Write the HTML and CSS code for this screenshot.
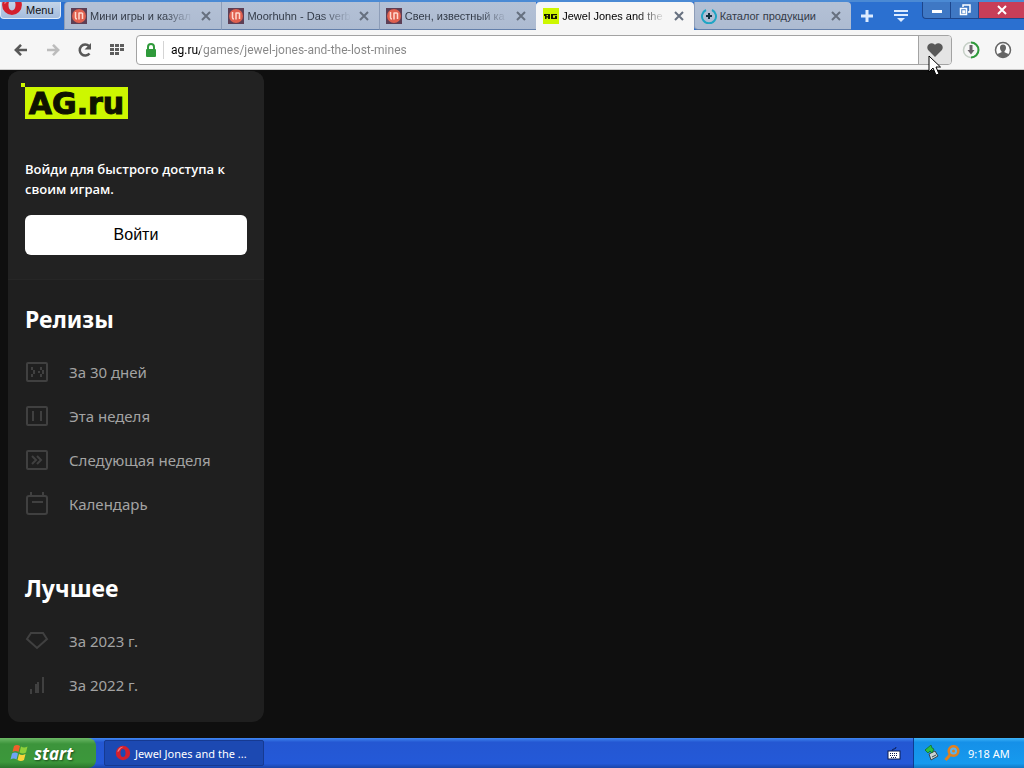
FILE: index.html
```html
<!DOCTYPE html>
<html lang="ru">
<head>
<meta charset="UTF-8" />
<meta name="viewport" content="width=device-width, initial-scale=1" />
<title>Jewel Jones and the Lost Mines</title>
<link rel="stylesheet" href="styles.css">
</head>
<body>

<!-- shared symbols -->
<svg class="symbols" aria-hidden="true">
  <symbol id="opera" viewBox="0 0 20 20">
    <path fill="#d3202e" fill-rule="evenodd" d="M10 1a9 9 0 1 0 0 18a9 9 0 1 0 0-18zM10 5c2 0 3.200 2 3.200 5s-1.200 5-3.200 5-3.200-2-3.200-5 1.200-5 3.200-5z"/>
    <path fill="#f07a80" d="M5 4.500Q7.500 1.800 10.500 2.200 7 3.500 5.500 7 4 9 3 9 3 6.500 5 4.500z"/>
  </symbol>
  <symbol id="mini" viewBox="0 0 16 16">
    <rect width="16" height="16" fill="#5d3f55"/>
    <circle cx="8" cy="8" r="7" fill="#e0604f"/>
    <path d="M4.500 4v5.500q0 1.500 1.500 1.500M8 4.500v7M11.500 5v6M8 5h3.500" stroke="#ffd9cf" stroke-width="1.500" fill="none"/>
  </symbol>
  <symbol id="close" viewBox="0 0 10 10">
    <path d="M1 1l8 8M9 1l-8 8" stroke="currentColor" stroke-width="2" fill="none"/>
  </symbol>
</svg>

<header class="titlebar">
  <button class="menu-btn"><svg class="menu-logo" width="22" height="24"><use href="#opera"/></svg>Menu</button>
  <nav class="tabs" aria-label="Tabs">
    <div class="tab">
      <svg width="16" height="16"><use href="#mini"/></svg>
      <a href="#" class="tab-title fade">Мини игры и казуал</a>
      <button class="tab-close" aria-label="Close"><svg width="10" height="10"><use href="#close"/></svg></button>
    </div>
    <div class="tab">
      <svg width="16" height="16"><use href="#mini"/></svg>
      <a href="#" class="tab-title fade">Moorhuhn - Das verb</a>
      <button class="tab-close" aria-label="Close"><svg width="10" height="10"><use href="#close"/></svg></button>
    </div>
    <div class="tab">
      <svg width="16" height="16"><use href="#mini"/></svg>
      <a href="#" class="tab-title fade">Свен, известный ка</a>
      <button class="tab-close" aria-label="Close"><svg width="10" height="10"><use href="#close"/></svg></button>
    </div>
    <div class="tab active">
      <svg width="16" height="16" viewBox="0 0 16 16">
        <rect width="16" height="16" fill="#cdf700"/>
        <path fill="#161900" fill-rule="evenodd" d="M1 6h6v5H5V9.500H3.500V11H2V8H1zM3.500 7v1.300H5V7zM8 6h6v1.200H10v2.600h2V8h2v3H8z"/>
      </svg>
      <a href="#" class="tab-title fade">Jewel Jones and the l</a>
      <button class="tab-close" aria-label="Close"><svg width="10" height="10"><use href="#close"/></svg></button>
    </div>
    <div class="tab">
      <svg width="16" height="16" viewBox="0 0 16 16">
        <path d="M5 2A7 7 0 1 0 11 2" fill="none" stroke="#1fa5c4" stroke-width="2"/>
        <path d="M8 5v6M5 8h6" stroke="#12303f" stroke-width="2"/>
      </svg>
      <a href="#" class="tab-title">Каталог продукции</a>
      <button class="tab-close" aria-label="Close"><svg width="10" height="10"><use href="#close"/></svg></button>
    </div>
  </nav>
  <button class="strip-btn" aria-label="New tab">
    <svg width="12" height="12" viewBox="0 0 12 12"><path d="M6 0v12M0 6h12" stroke="#dcebff" stroke-width="3"/></svg>
  </button>
  <button class="strip-btn" aria-label="Tab menu">
    <svg width="14" height="14" viewBox="0 0 14 14"><path d="M0 2h14M0 6h14" stroke="#dcebff" stroke-width="2"/><path d="M3 9h8l-4 4z" fill="#dcebff"/></svg>
  </button>
  <div class="window-controls">
    <button aria-label="Minimize"><svg width="12" height="12" viewBox="0 0 12 12"><rect x="1" y="6" width="10" height="3" fill="#fff"/></svg></button>
    <button aria-label="Restore"><svg width="12" height="12" viewBox="0 0 12 12"><path d="M4 3V1h7v7H9M1.500 4.500h6v6h-6zM4 7h1.500v1.500H4z" fill="none" stroke="#fff" stroke-width="1.500"/></svg></button>
    <button class="close-window" aria-label="Close window"><svg width="10" height="10"><use href="#close"/></svg></button>
  </div>
</header>

<div class="toolbar">
  <button class="tool" aria-label="Back">
    <svg width="14" height="12" viewBox="0 0 16 14"><path d="M15 7H3M8 1L2 7l6 6" fill="none" stroke="#585858" stroke-width="3"/></svg>
  </button>
  <button class="tool" aria-label="Forward">
    <svg width="14" height="12" viewBox="0 0 16 14"><path d="M1 7h12M8 1l6 6-6 6" fill="none" stroke="#bcbcbc" stroke-width="3"/></svg>
  </button>
  <button class="tool" aria-label="Reload">
    <svg width="16" height="16" viewBox="0 0 16 16"><path d="M12.500 11.500A5.500 5.500 0 1 1 12 4" fill="none" stroke="#585858" stroke-width="2.500"/><path d="M14 1v6.500H7.500z" fill="#585858"/></svg>
  </button>
  <button class="tool" aria-label="Speed dial">
    <svg width="14" height="12" viewBox="0 0 14 12"><path d="M0 1.500h14M0 5.500h14M0 9.500h9" stroke="#5d5d5d" stroke-width="3" stroke-dasharray="4 1"/></svg>
  </button>
  <div class="address">
    <svg class="lock" width="12" height="14" viewBox="0 0 12 14"><path d="M3 7V4a3 3 0 0 1 6 0v3" fill="none" stroke="#2f9a3b" stroke-width="2"/><rect x="1" y="6" width="10" height="8" rx="1" fill="#2f9a3b"/></svg>
    <input type="text" aria-label="Address" value="ag.ru/games/jewel-jones-and-the-lost-mines">
    <button class="heart" aria-label="Bookmark">
      <svg width="18" height="16" viewBox="0 0 18 16"><path d="M9 15L2.300 8.300A4.300 4.300 0 0 1 9 2.700a4.300 4.300 0 0 1 6.700 5.600z" fill="#585858"/></svg>
      <svg class="cursor" width="13" height="22" viewBox="0 0 13 22"><path d="M1 1v16l4-4 3 7 3-1-3-7h4.500z" fill="#fff" stroke="#000"/></svg>
    </button>
  </div>
  <button class="tool" aria-label="Downloads">
    <svg width="18" height="18" viewBox="0 0 18 18"><circle cx="9" cy="9" r="7.500" fill="none" stroke="#c5cfc6" stroke-width="1.500"/><path d="M9 1.500a7.500 7.500 0 0 1 0 15" fill="none" stroke="#2f9a3b" stroke-width="2"/><path d="M7.500 4h3v5h2L9 13.500 5.500 9h2z" fill="#686068"/></svg>
  </button>
  <button class="tool" aria-label="Profile">
    <svg width="18" height="18" viewBox="0 0 18 18"><circle cx="9" cy="9" r="7.500" fill="#fff" stroke="#666" stroke-width="1.500"/><path d="M9 3.500c2.200 0 3 1.500 3 3.300 0 1.500-.6 2.700-1.500 3.400v1l4 1.800A7 7 0 0 1 9 16.500 7 7 0 0 1 3.500 13l4-1.800v-1C6.600 9.500 6 8.300 6 6.800c0-1.800.8-3.300 3-3.300z" fill="#666"/></svg>
  </button>
</div>

<main class="page">
  <aside class="sidebar">
    <div class="login">
      <a href="#" class="logo">AG.ru</a>
      <p>Войди для быстрого доступа к своим играм.</p>
      <button class="login-btn">Войти</button>
    </div>
    <nav class="group">
      <h2>Релизы</h2>
      <a href="#"><svg width="24" height="24" viewBox="0 0 24 24"><rect x="2" y="3" width="20" height="18" rx="1"/><path d="M7 7v3M7 14v3M9 10v4M16 7v3M16 14v3M13 12h2M18 10v4"/></svg>За 30 дней</a>
      <a href="#"><svg width="24" height="24" viewBox="0 0 24 24"><rect x="2" y="3" width="20" height="18" rx="1"/><path d="M8 7v10M16 7v10"/></svg>Эта неделя</a>
      <a href="#"><svg width="24" height="24" viewBox="0 0 24 24"><rect x="2" y="3" width="20" height="18" rx="1"/><path d="M7 8l4 4-4 4M12 8l4 4-4 4"/></svg>Следующая неделя</a>
      <a href="#"><svg width="24" height="24" viewBox="0 0 24 24"><rect x="2" y="4" width="20" height="18" rx="2"/><path d="M6 0v4M18 0v4M7 10h11"/></svg>Календарь</a>
    </nav>
    <nav class="group">
      <h2>Лучшее</h2>
      <a href="#"><svg width="24" height="24" viewBox="0 0 24 24"><path d="M6 4h12l4 6-10 9L2 10z"/></svg>За 2023 г.</a>
      <a href="#"><svg width="24" height="24" viewBox="0 0 24 24"><path d="M6 16v5M11 11v9M13 9v11M18 4v16"/></svg>За 2022 г.</a>
    </nav>
  </aside>
</main>

<footer class="taskbar">
  <button class="start">
    <svg width="20" height="18" viewBox="0 0 20 18">
      <path d="M4 2q3-2 6 0L8.500 8q-3-2-6 0z" fill="#f0602b"/>
      <path d="M11 2.500q3 2 6.500 0L16 8.500q-3 2-6.500 0z" fill="#8ed03a"/>
      <path d="M2 9.500q3-2 6 0L6.500 15.500q-3-2-6 0z" fill="#6ea4f5"/>
      <path d="M9 10q3 2 6.500 0L14 16q-3 2-6.500 0z" fill="#f8d33a"/>
    </svg>start
  </button>
  <button class="task"><svg width="16" height="16"><use href="#opera"/></svg>Jewel Jones and the ...</button>
  <svg class="keyboard" width="14" height="13" viewBox="0 0 14 13">
    <path d="M5 4q0-2 2-2t2-2" fill="none" stroke="#0b1c50"/>
    <rect x="1" y="4" width="12" height="8" fill="#fff" stroke="#0b1c50"/>
    <path d="M3 6.500h8M3 8.500h8M4 10.500h6" stroke="#0b1c50" stroke-dasharray="1 1"/>
  </svg>
  <div class="tray">
    <svg width="16" height="16" viewBox="0 0 16 16"><path d="M5 9l6-3 3 5-7 4z" fill="#c9d2d4" stroke="#37464c"/><path d="M8 12l4-2" stroke="#37464c"/><path d="M1 5l6-5 1 3 2 1-2 4-2-2-2 2z" fill="#2bbf45" stroke="#14702a" stroke-width=".8"/></svg>
    <svg width="16" height="16" viewBox="0 0 16 16"><circle cx="9.500" cy="6" r="4.800" fill="#58b2ef" stroke="#e0801d" stroke-width="2.500"/><circle cx="9.500" cy="6" r="1.500" fill="#e0801d"/><path d="M6 10l-4.500 5" stroke="#e0801d" stroke-width="3"/></svg>
    <time>9:18 AM</time>
  </div>
</footer>

</body>
</html>
```
FILE: styles.css
```css
* {
  box-sizing: border-box;
}
body {
  margin: 0;
  min-height: 100vh;
  display: flex;
  flex-direction: column;
  background: #0f0f0f;
  font-family: "Noto Sans", sans-serif;
}
button {
  border: none;
  padding: 0;
  margin: 0;
  background: none;
  font: inherit;
  color: inherit;
  cursor: pointer;
}
a {
  color: inherit;
  text-decoration: none;
}
svg {
  flex: none;
}
.symbols {
  position: absolute;
  width: 0;
  height: 0;
}

/* browser tabs */
.titlebar {
  display: flex;
  height: 30px;
  background: #2b70d0;
  border-top: 2px solid #4b8ad4;
  font: 11px "Liberation Sans", sans-serif;
}
.menu-btn {
  display: flex;
  align-items: center;
  gap: 3px;
  width: 61px;
  height: 17px;
  margin-right: 3px;
  overflow: hidden;
  background: linear-gradient(#c4d4e8, #a4bcde);
  border: 1px solid #e0ebf8;
  border-top: none;
  border-radius: 0 0 4px 4px;
  color: #111;
}
.menu-logo {
  margin-top: -10px;
}
.tabs {
  display: flex;
  flex: 0 1 787px;
  min-width: 0;
}
.tab {
  display: flex;
  align-items: center;
  flex: 1 1 0;
  min-width: 0;
  gap: 3px;
  padding: 0 7px 0 6px;
  background: linear-gradient(#b4c1d6, #adbbd1);
  border-left: 1px solid #8d9db8;
  border-bottom: 1px solid #6480ab;
  color: #333b48;
}
.tab:first-child {
  border-top-left-radius: 4px;
}
.tab:last-child {
  border-radius: 0 4px 0 4px;
}
.tab.active {
  background: #f6f6f6;
  border-color: #f6f6f6;
  border-radius: 4px 4px 0 0;
  color: #000;
}
.tab-title {
  flex: 1;
  min-width: 0;
  white-space: nowrap;
}
.fade {
  mask-image: linear-gradient(90deg, #000 70%, transparent 98%);
}
.tab-close {
  display: flex;
  justify-content: center;
  width: 16px;
  color: #66707f;
}
.strip-btn {
  width: 34px;
  display: flex;
  align-items: center;
  justify-content: center;
  padding-right: 3px;
}
.window-controls {
  display: flex;
  height: 17px;
  margin-left: auto;
}
.window-controls button {
  display: flex;
  align-items: center;
  justify-content: center;
  width: 28px;
  background: #3f78c4;
  border: 1px solid #1d468c;
  border-top: none;
  border-right: none;
}
.window-controls button:first-child {
  border-bottom-left-radius: 4px;
}
.window-controls .close-window {
  width: 46px;
  background: #c83e58;
  color: #fff;
}

/* address bar */
.toolbar {
  display: flex;
  align-items: center;
  height: 40px;
  padding: 0 5px;
  background: #f6f6f6;
  border-bottom: 1px solid #c9c9c9;
}
.tool {
  display: flex;
  align-items: center;
  justify-content: center;
  width: 32px;
  height: 32px;
}
.address {
  display: flex;
  flex: 1;
  align-items: center;
  height: 30px;
  margin: 0 3px;
  background: #fff;
  border: 1px solid #a3a3a3;
  border-radius: 4px;
}
.lock {
  margin: 0 6px 0 8px;
}
.address input {
  flex: 1;
  min-width: 0;
  height: 18px;
  padding: 0 0 0 7px;
  border: none;
  border-left: 1px solid #d4d4d4;
  outline: none;
  font: 12px "Roboto", sans-serif;
  color: transparent;
  background: linear-gradient(90deg, #000 36px, #868686 36px);
  background-clip: text;
}
.heart {
  position: relative;
  display: flex;
  align-items: center;
  justify-content: center;
  width: 33px;
  height: 28px;
  background: #e4e4e4;
  border-left: 1px solid #a3a3a3;
  border-radius: 0 3px 3px 0;
}
.cursor {
  position: absolute;
  left: 9px;
  top: 19px;
}

/* site */
.page {
  flex: 1;
  padding: 1px 8px 16px;
}
.sidebar {
  width: 256px;
  background: #1f1f1f;
  border-radius: 12px;
  color: #fff;
}
.login {
  padding: 16px 17px 24px;
  background: #222;
  border-bottom: 1px solid #262626;
  border-radius: 12px 12px 0 0;
}
.logo {
  position: relative;
  display: block;
  width: 103px;
  height: 32px;
  background: #cdf700;
  color: #0f1200;
  font: bold 30px/34px "DejaVu Sans", sans-serif;
  -webkit-text-stroke: 1px #0f1200;
  text-align: center;
}
.logo::before {
  content: "";
  position: absolute;
  left: -4px;
  top: -4px;
  width: 4px;
  height: 4px;
  background: #cdf700;
}
.login p {
  margin: 40px 0 16px;
  font: 600 13px/20px "Open Sans", sans-serif;
}
.login-btn {
  width: 100%;
  height: 40px;
  background: #fff;
  border-radius: 6px;
  font: 16px "Liberation Sans", sans-serif;
  color: #000;
}
.group {
  padding: 23px 17px;
}
.group:last-child {
  padding-bottom: 15px;
}
.group h2 {
  margin: 0 0 15px;
  font-size: 23px;
  line-height: 32px;
}
.group a {
  display: flex;
  align-items: center;
  gap: 20px;
  height: 44px;
  font-size: 15px;
  color: #a3a3a3;
}
.group svg {
  fill: none;
  stroke: #404040;
  stroke-width: 2;
}

/* windows taskbar */
.taskbar {
  display: flex;
  align-items: center;
  height: 30px;
  background: linear-gradient(#3f86f0, #2457d2 14%, #2459d8 85%, #1b45a8);
  font: 11px "Noto Sans", sans-serif;
  color: #fff;
}
.start {
  display: flex;
  align-items: center;
  gap: 4px;
  width: 96px;
  height: 30px;
  padding-left: 10px;
  background: linear-gradient(#6cb866, #3c943b 20%, #3c983b 80%, #2a752b);
  border-radius: 0 8px 8px 0;
  font: italic bold 17px "Open Sans", sans-serif;
  text-shadow: 1px 1px 2px #1b4a1b;
}
.task {
  display: flex;
  align-items: center;
  gap: 4px;
  width: 160px;
  height: 26px;
  margin-left: 8px;
  padding-left: 10px;
  background: #1c49b2;
  border: 1px solid #163a91;
  border-radius: 2px;
}
.keyboard {
  margin-left: auto;
  margin-right: 12px;
}
.tray {
  display: flex;
  align-items: center;
  gap: 4px;
  width: 111px;
  height: 30px;
  padding-left: 10px;
  background: linear-gradient(#3fb4f8, #1590e8 14%, #169aee 85%, #1278c4);
  border-left: 1px solid #0d3c91;
}
.tray time {
  margin-left: 4px;
}
```
